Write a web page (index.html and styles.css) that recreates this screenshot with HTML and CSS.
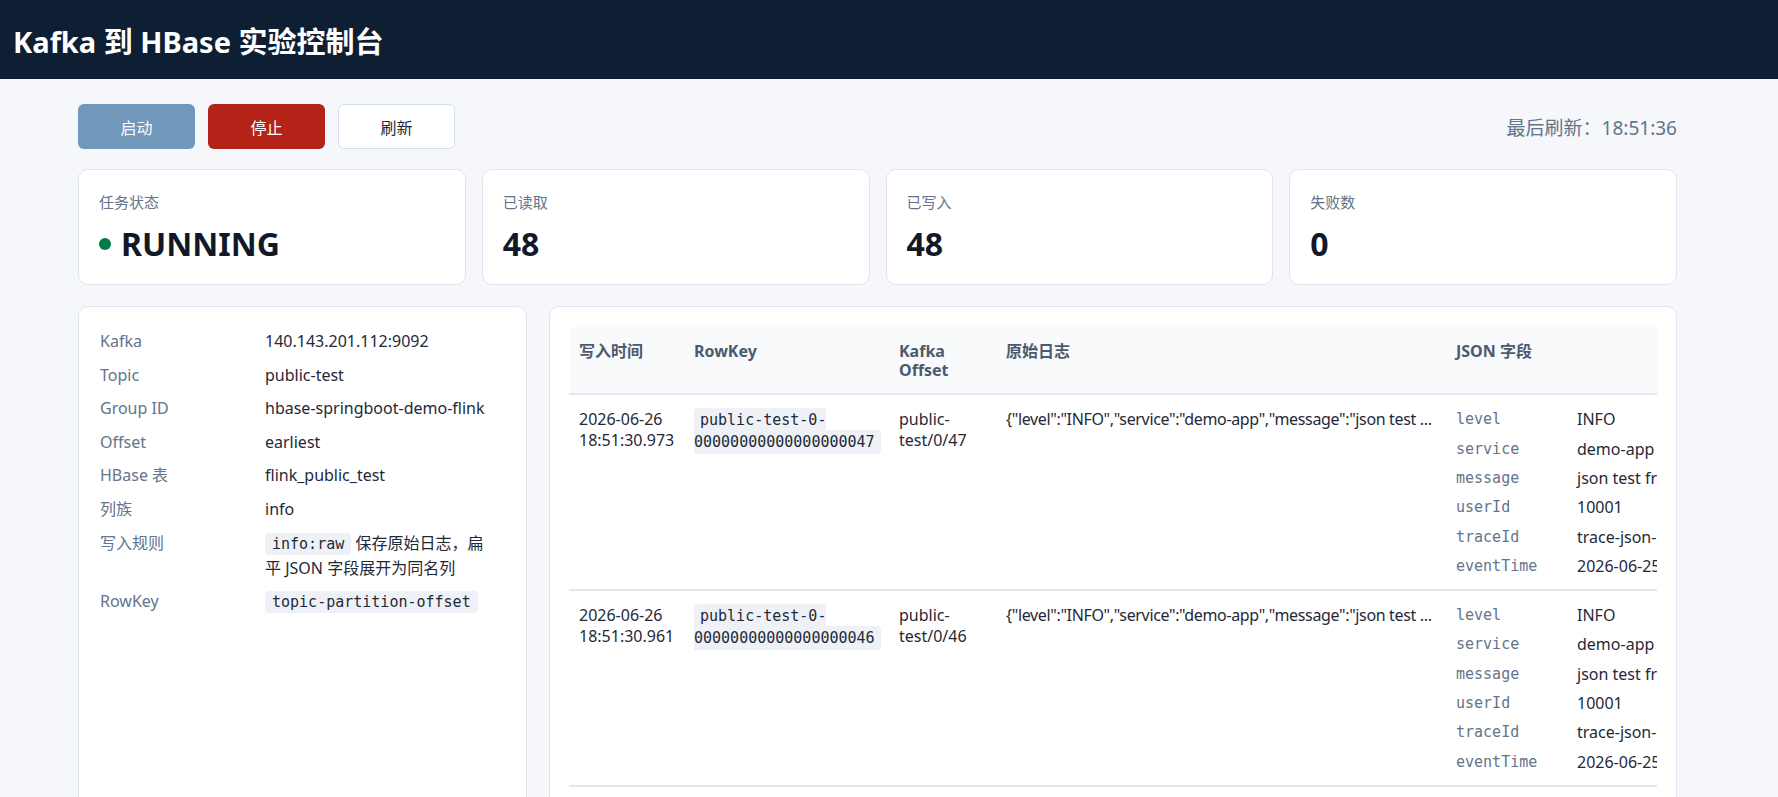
FILE: index.html
```html
<!DOCTYPE html>
<html lang="zh-CN">
<head>
    <meta charset="utf-8">
    <title>Kafka 到 HBase 实验控制台</title>
    <link rel="stylesheet" href="styles.css">
</head>
<body>
    <header class="topbar">
        <h1>Kafka 到 HBase 实验控制台</h1>
    </header>

    <main class="page">
        <div class="toolbar">
            <div class="actions">
                <button class="btn btn-start" disabled>启动</button>
                <button class="btn btn-stop">停止</button>
                <button class="btn btn-refresh">刷新</button>
            </div>
            <span class="refresh-time">最后刷新：18:51:36</span>
        </div>

        <section class="stats">
            <div class="stat-card">
                <div class="stat-label">任务状态</div>
                <div class="stat-value"><span class="dot"></span>RUNNING</div>
            </div>
            <div class="stat-card">
                <div class="stat-label">已读取</div>
                <div class="stat-value">48</div>
            </div>
            <div class="stat-card">
                <div class="stat-label">已写入</div>
                <div class="stat-value">48</div>
            </div>
            <div class="stat-card">
                <div class="stat-label">失败数</div>
                <div class="stat-value">0</div>
            </div>
        </section>

        <section class="content">
            <aside class="panel config">
                <dl class="config-list">
                    <dt>Kafka</dt><dd>140.143.201.112:9092</dd>
                    <dt>Topic</dt><dd>public-test</dd>
                    <dt>Group ID</dt><dd>hbase-springboot-demo-flink</dd>
                    <dt>Offset</dt><dd>earliest</dd>
                    <dt>HBase 表</dt><dd>flink_public_test</dd>
                    <dt>列族</dt><dd>info</dd>
                    <dt>写入规则</dt><dd><code>info:raw</code> 保存原始日志，扁平 JSON 字段展开为同名列</dd>
                    <dt>RowKey</dt><dd><code>topic-partition-offset</code></dd>
                </dl>
            </aside>

            <div class="panel records">
                <div class="table-wrap">
                    <table class="record-table">
                        <colgroup>
                            <col class="col-time">
                            <col class="col-key">
                            <col class="col-offset">
                            <col class="col-raw">
                            <col class="col-json">
                        </colgroup>
                        <thead>
                            <tr>
                                <th>写入时间</th>
                                <th>RowKey</th>
                                <th>Kafka Offset</th>
                                <th>原始日志</th>
                                <th>JSON 字段</th>
                            </tr>
                        </thead>
                        <tbody>
                            <tr>
                                <td>2026-06-26 18:51:30.973</td>
                                <td><code>public-test-0-00000000000000000047</code></td>
                                <td>public-test/0/47</td>
                                <td class="raw">{"level":"INFO","service":"demo-app","message":"json test ...</td>
                                <td>
                                    <div class="fields">
                                        <span class="key">level</span><span>INFO</span>
                                        <span class="key">service</span><span>demo-app</span>
                                        <span class="key">message</span><span>json test from flink</span>
                                        <span class="key">userId</span><span>10001</span>
                                        <span class="key">traceId</span><span>trace-json-0047</span>
                                        <span class="key">eventTime</span><span>2026-06-25 18:51:30</span>
                                    </div>
                                </td>
                            </tr>
                            <tr>
                                <td>2026-06-26 18:51:30.961</td>
                                <td><code>public-test-0-00000000000000000046</code></td>
                                <td>public-test/0/46</td>
                                <td class="raw">{"level":"INFO","service":"demo-app","message":"json test ...</td>
                                <td>
                                    <div class="fields">
                                        <span class="key">level</span><span>INFO</span>
                                        <span class="key">service</span><span>demo-app</span>
                                        <span class="key">message</span><span>json test from flink</span>
                                        <span class="key">userId</span><span>10001</span>
                                        <span class="key">traceId</span><span>trace-json-0046</span>
                                        <span class="key">eventTime</span><span>2026-06-25 18:51:30</span>
                                    </div>
                                </td>
                            </tr>
                            <tr>
                                <td>2026-06-26 18:51:30.948</td>
                                <td><code>public-test-0-00000000000000000045</code></td>
                                <td>public-test/0/45</td>
                                <td class="raw">{"level":"INFO","service":"demo-app","message":"json test ...</td>
                                <td>
                                    <div class="fields">
                                        <span class="key">level</span><span>INFO</span>
                                        <span class="key">service</span><span>demo-app</span>
                                        <span class="key">message</span><span>json test from flink</span>
                                        <span class="key">userId</span><span>10001</span>
                                        <span class="key">traceId</span><span>trace-json-0045</span>
                                        <span class="key">eventTime</span><span>2026-06-25 18:51:30</span>
                                    </div>
                                </td>
                            </tr>
                        </tbody>
                    </table>
                </div>
            </div>
        </section>
    </main>
</body>
</html>
```

FILE: styles.css
```css
*{
    box-sizing: border-box;
}

body{
    margin: 0;
    background-color: #f5f7fb;
    font-family: "Noto Sans", "Noto Sans CJK SC", sans-serif;
    font-size: 16px;
    color: #1f2937;
}

.topbar{
    height: 79px;
    background-color: #0f1f33;
    display: flex;
    align-items: center;
    padding: 0 13px;
}
.topbar h1{
    margin: 0;
    color: #fff;
    font-size: 29px;
    font-weight: 700;
}

.page{
    padding: 25px 101px 40px 78px;
}

.toolbar{
    display: flex;
    justify-content: space-between;
    align-items: center;
}
.actions{
    display: flex;
    gap: 13px;
}
.btn{
    width: 117px;
    height: 45px;
    border: 1px solid transparent;
    border-radius: 6px;
    font-family: inherit;
    font-size: 16px;
    cursor: pointer;
}
.btn-start{
    background-color: #1a5a8f;
    color: #fff;
    opacity: 0.6;
    cursor: default;
}
.btn-stop{
    background-color: #b42318;
    color: #fff;
}
.btn-refresh{
    background-color: #fff;
    border-color: #d6dfeb;
    color: #1f2937;
}
.refresh-time{
    font-size: 19px;
    color: #64748b;
}

.stats{
    display: grid;
    grid-template-columns: repeat(4, 1fr);
    gap: 16px;
    margin-top: 20px;
}
.stat-card{
    background-color: #fff;
    border: 1px solid #dfe5ee;
    border-radius: 10px;
    padding: 21px 20px;
}
.stat-label{
    font-size: 15px;
    line-height: 22px;
    color: #64748b;
}
.stat-value{
    margin-top: 12px;
    font-size: 32px;
    line-height: 38px;
    font-weight: 700;
    color: #111827;
    display: flex;
    align-items: center;
    gap: 10px;
}
.dot{
    width: 12px;
    height: 12px;
    border-radius: 50%;
    background-color: #047a48;
}

.content{
    display: grid;
    grid-template-columns: 449px minmax(0, 1fr);
    gap: 22px;
    margin-top: 21px;
}
.panel{
    background-color: #fff;
    border: 1px solid #dfe5ee;
    border-radius: 10px;
}

.config{
    padding: 22px 30px 20px 21px;
}
.config-list{
    margin: 0;
    display: grid;
    grid-template-columns: 165px 1fr;
    row-gap: 9.6px;
    line-height: 24px;
}
.config-list dt{
    color: #64748b;
}
.config-list dd{
    margin: 0;
}

code{
    font-family: "DejaVu Sans Mono", monospace;
    font-size: 15px;
    background-color: #eef2f6;
    border-radius: 4px;
    padding: 2px 7px;
}

.records{
    padding: 20px 19px;
    min-width: 0;
}
.table-wrap{
    overflow-x: auto;
}
.record-table{
    border-collapse: collapse;
    table-layout: fixed;
    width: 1207px;
}
.col-time{ width: 115px; }
.col-key{ width: 205px; }
.col-offset{ width: 107px; }
.col-raw{ width: 450px; }
.col-json{ width: 330px; }

.record-table th{
    text-align: left;
    vertical-align: top;
    padding: 15px 10px 13px;
    font-size: 16px;
    line-height: 1.2;
    font-weight: 700;
    color: #4b5a6e;
    background-color: #f8fafc;
    border-bottom: 2px solid #e3e8ef;
}
.record-table td{
    vertical-align: top;
    padding: 14px 10px 12px;
    line-height: 1.3;
    border-bottom: 2px solid #e3e8ef;
}
.record-table td code{
    padding: 3px 6px;
}
.record-table td.raw{
    white-space: nowrap;
    overflow: hidden;
    letter-spacing: -0.35px;
}

.fields{
    display: grid;
    grid-template-columns: 121px auto;
    grid-auto-rows: 21.3px;
    row-gap: 8px;
    line-height: 21.3px;
    white-space: nowrap;
    align-items: center;
}
.fields .key{
    font-family: "DejaVu Sans Mono", monospace;
    font-size: 15px;
    color: #64748b;
}
```
